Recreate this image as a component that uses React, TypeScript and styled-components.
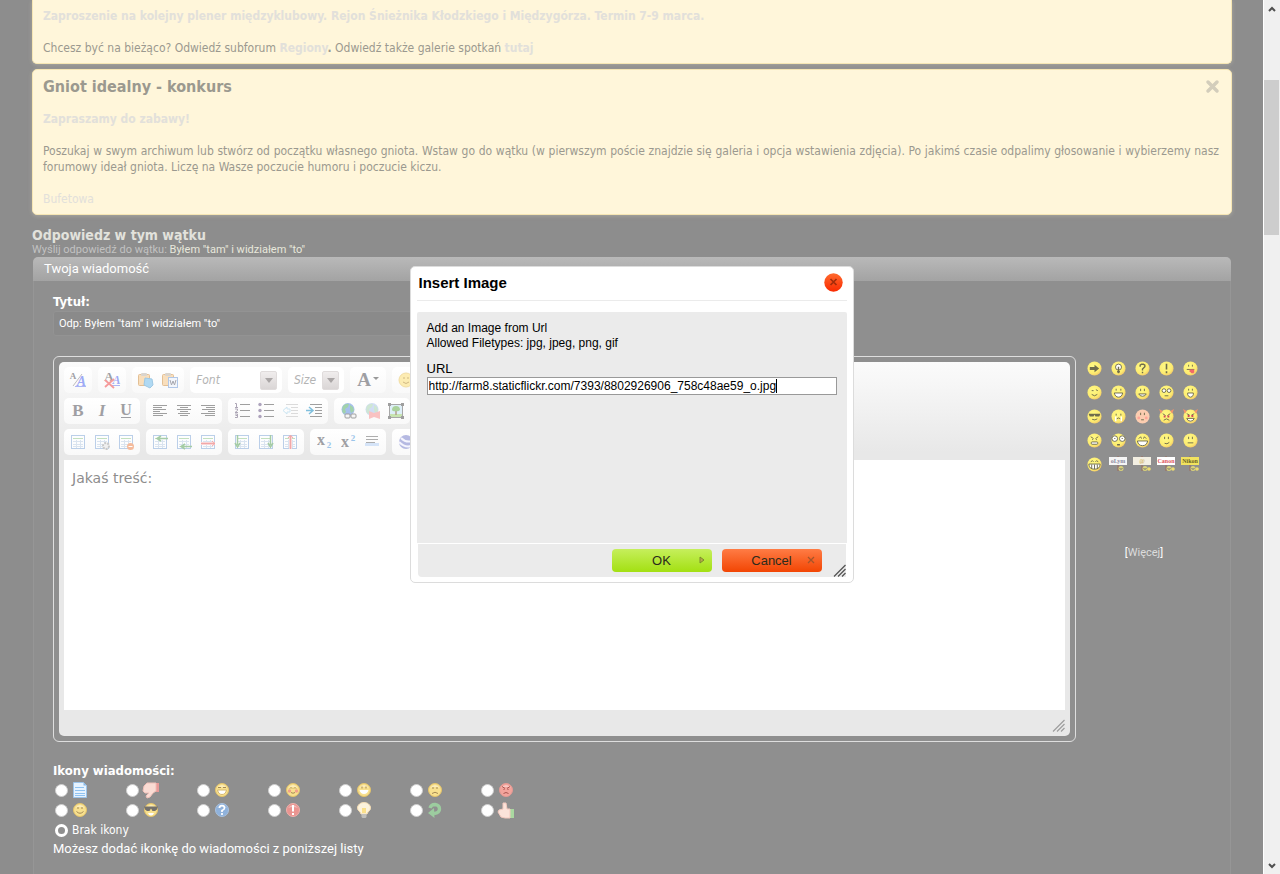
import React from "react";
import styled, { createGlobalStyle, css } from "styled-components";

const ui = `"DejaVu Sans Condensed", "DejaVu Sans", sans-serif`;
const narrow = `Roboto, "Open Sans", sans-serif`;
const arial = `"Liberation Sans", Arial, sans-serif`;

const GlobalStyle = createGlobalStyle`
  *, *::before, *::after { box-sizing: border-box; }
  body { margin: 0; background: #8d8d8d; font: 12px/16px ${ui}; color: #fff; }
  button, input, select, textarea { font: inherit; margin: 0; }
  svg { display: block; flex: none; overflow: visible; }
`;

/* ---------- page frame ---------- */

const Shell = styled.div`
  display: flex;
  height: 100vh;
  overflow: hidden;
`;

const Page = styled.main`
  flex: 1;
  min-width: 0;
  padding: 0 31px 0 32px;
  position: relative;
  display: flex;
  flex-direction: column;
`;

const Scrollbar = styled.aside`
  width: 17px;
  flex: none;
  background: #f0f0f0;
  border-left: 1px solid #fff;
  display: flex;
  flex-direction: column;
`;

const ScrollArrow = styled.button`
  border: 0;
  padding: 0;
  height: 17px;
  background: none;
  display: grid;
  place-items: center;
`;

const ScrollTrack = styled.div`
  flex: 1;
  padding: 63px 1px 0 0;
`;

const ScrollThumb = styled.div`
  height: 20%;
  background: #cdcdcd;
`;

/* ---------- notices ---------- */

const Notice = styled.section<{ $cut?: boolean }>`
  flex: none;
  color: #9b998f;
  background: #fff6da;
  border: 1px solid #f6e6b4;
  border-radius: 5px;
  padding: 6px 12px 7px 10px;
  box-shadow: 0 1px 4px rgba(255, 246, 218, 0.25);
  text-align: justify;
  ${(p) =>
    p.$cut &&
    css`
      border-top: 0;
      border-radius: 0 0 5px 5px;
      padding-top: 8px;
      margin-bottom: 5px;
    `}
`;

const NoticeHead = styled.header`
  display: flex;
  justify-content: space-between;
  align-items: flex-start;
  margin-bottom: 13px;
`;

const NoticeTitle = styled.h2`
  margin: 0;
  font-size: 16px;
  line-height: 22px;
`;

const Dismiss = styled.button`
  border: 0;
  padding: 0;
  background: none;
  width: 13px;
  height: 20px;
`;

const Para = styled.p`
  margin: 0 0 16px;
  &:last-child {
    margin-bottom: 0;
  }
`;

const PaleLink = styled.a<{ $bold?: boolean }>`
  color: #e2e0da;
  text-decoration: none;
  font-weight: ${(p) => (p.$bold ? 700 : 400)};
`;

/* ---------- reply form ---------- */

const ReplyTitle = styled.h1`
  margin: 12px 0 0;
  font-size: 14px;
  line-height: 16px;
  color: #e2e2dc;
`;

const ReplySub = styled.p`
  margin: 0;
  font: 11px/14px ${narrow};
  color: #c2c2c2;
  a {
    color: #e8e8dc;
    text-decoration: none;
  }
`;

const Block = styled.form`
  margin: 0 1px;
  flex: 1;
  display: flex;
  flex-direction: column;
`;

const BlockHead = styled.h3`
  margin: 0;
  flex: none;
  padding: 0 11px;
  font: 400 13px/24px ${narrow};
  border-radius: 5px 5px 0 0;
  background: linear-gradient(#b9b9b9, #a3a3a3);
`;

const BlockBody = styled.div`
  flex: 1;
  padding: 12px 24px 0 19px;
  background: #8f8f8f;
  border: solid #969696;
  border-width: 0 1px;
`;

const Label = styled.label`
  display: block;
  font-size: 13px;
  font-weight: 700;
  line-height: 18px;
`;

const TitleInput = styled.input`
  display: block;
  width: 100%;
  max-width: 480px;
  height: 25px;
  margin-bottom: 20px;
  padding: 0 5px;
  && {
    font: 11px/16px ${narrow};
  }
  color: #fff;
  background: #8a8a8a;
  border: 1px solid #939393;
  border-radius: 3px;
`;

const EditRow = styled.div`
  display: flex;
  gap: 6px;
  margin-bottom: 20px;
`;

const EditorFrame = styled.div`
  flex: 1;
  min-width: 0;
  padding: 5px;
  border: 1px solid #dedede;
  border-radius: 6px;
`;

const Editor = styled.div`
  padding: 5px 5px 0;
  border-radius: 5px;
  background: linear-gradient(#fbfbfb, #e8e8e8 90px);
`;

const Tools = styled.div`
  display: flex;
  flex-direction: column;
  gap: 5px;
  margin-bottom: 5px;
`;

const ToolRow = styled.div`
  display: flex;
  gap: 6px;
`;

const Group = styled.div`
  display: flex;
  align-items: center;
  height: 26px;
  padding: 0 2px;
  border-radius: 5px;
  background: linear-gradient(#fff, #f9f9f9);
`;

const ToolButton = styled.button<{ $wide?: boolean }>`
  width: ${(p) => (p.$wide ? 32 : 24)}px;
  height: 24px;
  padding: 0;
  border: 0;
  background: none;
  display: grid;
  place-items: center;
  svg {
    opacity: 0.85;
  }
`;

const Combo = styled.label<{ $w: number }>`
  display: flex;
  align-items: center;
  width: ${(p) => p.$w}px;
  height: 26px;
  padding: 0 5px 0 6px;
  border-radius: 5px;
  background: #fff;
  select {
    flex: 1;
    min-width: 0;
    appearance: none;
    border: 0;
    padding: 0;
    background: none;
    font: italic 12px/16px ${ui};
    color: #b4b4b4;
  }
`;

const ComboArrow = styled.span`
  display: grid;
  place-items: center;
  width: 17px;
  height: 19px;
  border-radius: 2px;
  border: 1px solid #e0dcdc;
  background: linear-gradient(#f0eded, #dad6d6);
`;

const TextArea = styled.textarea`
  display: block;
  width: 100%;
  height: 250px;
  padding: 9px 8px;
  border: 0;
  resize: none;
  outline: 0;
  && {
    font: 14px/18px "DejaVu Sans", sans-serif;
  }
  color: #8d8d8d;
  background: #fff;
`;

const EditorFoot = styled.div`
  display: flex;
  justify-content: flex-end;
  align-items: center;
  height: 26px;
  padding-top: 4px;
`;

const Smilies = styled.div`
  width: 124px;
  flex: none;
  display: flex;
  flex-direction: column;
`;

const SmileyGrid = styled.div`
  display: grid;
  grid-template-columns: repeat(5, 24px);
  grid-auto-rows: 24px;
  margin-bottom: 69px;
`;

const SmileyButton = styled.button`
  border: 0;
  padding: 0;
  background: none;
  display: grid;
  place-items: center;
`;

const More = styled.div`
  text-align: center;
  font-family: ${narrow};
  font-size: 11px;
  a {
    color: #dcdcdc;
    text-decoration: none;
  }
`;

const IconSet = styled.fieldset`
  border: 0;
  margin: 0;
  padding: 0;
  legend {
    padding: 0;
    font-size: 13px;
    font-weight: 700;
    line-height: 18px;
  }
`;

const IconGrid = styled.div`
  display: grid;
  grid-template-columns: repeat(7, 71px);
  grid-auto-rows: 20px;
`;

const Choice = styled.label`
  display: flex;
  align-items: center;
  gap: 4px;
  padding-left: 2px;
  line-height: 20px;
`;

const Radio = styled.input`
  appearance: none;
  width: 13px;
  height: 13px;
  border-radius: 50%;
  background: #fff;
  border: 1px solid #cfcfcf;
  &:checked {
    background: #8f8f8f;
    border: 3px solid #fff;
  }
`;

const Hint = styled.p`
  margin: 0;
  font: 13px/18px ${narrow};
`;

/* ---------- dialog ---------- */

const Overlay = styled.div`
  position: absolute;
  inset: 0;
  display: flex;
  justify-content: center;
  align-items: flex-start;
  padding-top: 266px;
`;

const Dialog = styled.div`
  width: 444px;
  max-width: 100%;
  padding: 0 6px 5px;
  color: #000;
  font: 12px/15px ${arial};
  background: #fff;
  border: 1px solid #dcdcdc;
  border-radius: 5px;
`;

const DialogHead = styled.header`
  display: flex;
  align-items: center;
  justify-content: space-between;
  height: 34px;
  padding: 0 4px 2px 2px;
  border-bottom: 1px solid #ebebeb;
  margin-bottom: 11px;
  h2 {
    margin: 0;
    font-size: 15px;
    line-height: 18px;
  }
  button {
    border: 0;
    padding: 0;
    background: none;
  }
`;

const DialogBody = styled.div`
  height: 231px;
  padding: 9px 10px;
  background: #ebebeb;
  border-radius: 2px 2px 0 0;
  p {
    margin: 0 0 10px;
  }
  label {
    display: block;
    font-size: 13px;
    line-height: 15px;
  }
`;

const UrlBox = styled.div`
  display: flex;
  align-items: center;
  height: 18px;
  margin-top: 1px;
  padding: 0 1px;
  background: #fff;
  border: 1px solid #999;
  input {
    field-sizing: content;
    border: 0;
    padding: 0;
    outline: 0;
    background: none;
    font: 12px/14px ${arial};
    color: #000;
    caret-color: transparent;
  }
`;

const Caret = styled.span`
  width: 1px;
  height: 14px;
  background: #000;
`;

const DialogFoot = styled.footer`
  display: flex;
  justify-content: flex-end;
  align-items: flex-start;
  gap: 10px;
  height: 33px;
  margin: 1px 1px 0;
  padding-top: 5px;
  background: #ebebeb;
  border-radius: 0 0 0 4px;
`;

const ActionButton = styled.button<{ $tone: "ok" | "cancel" }>`
  display: grid;
  grid-template-columns: 1fr auto 1fr;
  align-items: center;
  width: 100px;
  height: 23px;
  padding: 0 7px 1px;
  border: 0;
  border-radius: 4px;
  font-size: 13px;
  color: #2b2b1c;
  background: ${(p) =>
    p.$tone === "ok" ? "linear-gradient(#c6ef5c, #a3e012)" : "linear-gradient(#ff7c45, #f24503)"};
  span {
    grid-column: 2;
  }
  svg {
    justify-self: end;
  }
`;

const GripSlot = styled.div`
  align-self: flex-end;
  display: flex;
  justify-content: flex-end;
  width: 14px;
`;

/* ---------- drawings ---------- */

const Svg = ({ s = 16, children }: { s?: number; children: React.ReactNode }) => (
  <svg width={s} height={s} viewBox="0 0 16 16" fill="none" aria-hidden="true">
    {children}
  </svg>
);

const Glyph = styled.text`
  font-family: "Liberation Serif", serif;
  font-weight: 700;
  font-size: 17px;
  text-anchor: middle;
  fill: #8f8f94;
`;

const lines = (rows: [number, number][], color = "#8f8f8f") =>
  rows.map(([a, b], i) => <path key={i} d={`M${a} ${2.5 + i * 2}H${b}`} stroke={color} />);

const Table = () => (
  <>
    <rect x="1.5" y="1.5" width="13" height="13" fill="#fdfeff" stroke="#b0c8e6" />
    <path d="M3 4.5h10" stroke="#b9dcb5" />
    <path d="M3 7.5h10M3 10.5h10M3 12.5h10M6.5 6v8M10.5 6v8" stroke="#d5e0ee" />
  </>
);

const Globe = ({ pale }: { pale?: boolean }) => (
  <g opacity={pale ? 0.4 : 0.8}>
    <circle cx="8" cy="6.5" r="6.5" fill="#7fa4e6" />
    <path d="M3 3q3-3 6-2l-1 3-3 2 1 3-2 2Q1 8 3 3zM10 2l3 2 1 4-3 2-1-3z" fill="#77bf86" />
  </g>
);

const Clip = () => (
  <>
    <rect x="0.5" y="2.5" width="11" height="11" rx="1" fill="#f9dab2" stroke="#dfb684" />
    <rect x="3" y="1" width="6" height="3" rx="1" fill="#d5cfc6" />
  </>
);

const toolArt: Record<string, React.ReactNode> = {
  styles: (
    <>
      <Glyph x="3" y="7" style={{ fontSize: 9 }}>A</Glyph>
      <path d="M3 14L12 2" stroke="#b5b5b5" />
      <Glyph x="11.5" y="14" style={{ fill: "#8e9cf5", fontSize: 14, fontStyle: "italic" }}>A</Glyph>
      <path d="M5 14.5h11" stroke="#9fabf5" />
    </>
  ),
  unformat: (
    <>
      <Glyph x="5" y="9" style={{ fontSize: 13 }}>A</Glyph>
      <Glyph x="12.5" y="12" style={{ fill: "#8e9cf5", fontSize: 12, fontStyle: "italic" }}>A</Glyph>
      <path d="M8 13.5h8" stroke="#9fabf5" />
      <path d="M1 8l9 8M10 7L1 15" stroke="#f58b8b" strokeWidth="1.8" />
    </>
  ),
  paste: (
    <>
      <Clip />
      <path d="M7 6l7 1 1 6-3 3-6-3z" fill="#a3d4f2" stroke="#8fc0e0" />
    </>
  ),
  word: (
    <>
      <Clip />
      <rect x="6.5" y="5.5" width="9" height="10" fill="#f2f6fc" stroke="#a5bfe5" />
      <path d="M8 8l1.5 5L11 9l1.5 4L14 8" stroke="#9a9aa2" />
    </>
  ),
  bold: <Glyph x="8" y="13">B</Glyph>,
  italic: <Glyph x="8" y="13" style={{ fontStyle: "italic" }}>I</Glyph>,
  underline: (
    <>
      <Glyph x="8" y="12" style={{ fontSize: 16 }}>U</Glyph>
      <path d="M3 14.5h10" stroke="#8f8f94" />
    </>
  ),
  left: lines([[1, 15], [1, 10], [1, 14], [1, 8], [1, 15], [1, 11]]),
  center: lines([[1, 15], [4, 12], [1, 15], [4, 12], [2, 14], [4, 12]]),
  right: lines([[1, 15], [6, 15], [2, 15], [8, 15], [1, 15], [5, 15]]),
  ol: (
    <>
      <path d="M1 .5h1.5V4M1 4.5h3M1 6h2.5v1.5L1 9.5h3M1 11h2.5v3.5H1M1.5 12.5h2" stroke="#a098aa" />
      <path d="M6 1.5h10M6 7.5h10M6 13.5h10" stroke="#8f8f8f" />
    </>
  ),
  ul: (
    <>
      <circle cx="2" cy="1.5" r="1.7" fill="#a094b2" />
      <circle cx="2" cy="7.5" r="1.7" fill="#a094b2" />
      <circle cx="2" cy="13.5" r="1.7" fill="#a094b2" />
      <path d="M6 1.5h10M6 7.5h10M6 13.5h10" stroke="#8f8f8f" />
    </>
  ),
  outdent: (
    <>
      <path d="M4 1.5h12M9 4.5h7M9 7.5h7M9 10.5h7M4 13.5h12" stroke="#d6d6d6" />
      <path d="M5 4L1 7.5 5 11V9h3V6H5z" stroke="#c5e3f2" />
    </>
  ),
  indent: (
    <>
      <path d="M4 1.5h12M9 4.5h7M9 7.5h7M9 10.5h7M4 13.5h12" stroke="#8f8f8f" />
      <path d="M3 4l4 3.5L3 11M0 7.5h6" stroke="#6bb5d8" strokeWidth="1.5" />
    </>
  ),
  link: (
    <>
      <Globe />
      <rect x="5" y="11" width="5" height="4" rx="1" fill="#f4f4f4" stroke="#8f8f8f" />
      <rect x="11" y="11" width="5" height="4" rx="1" fill="#f4f4f4" stroke="#8f8f8f" />
    </>
  ),
  unlink: (
    <>
      <Globe pale />
      <path d="M5 8l5 2 6-2v8l-6-2-5 2z" fill="#f9b9b9" />
    </>
  ),
  image: (
    <>
      <rect x="1.5" y="1.5" width="13" height="13" fill="#d9edf8" stroke="#999" />
      <path d="M2 11h12v3H2z" fill="#bfe0a4" />
      <path d="M8 12V8" stroke="#a58f78" strokeWidth="1.5" />
      <path d="M4 7q0-4 4-4t4 4q-2 2-4 1-3 1-4-1z" fill="#9ccb8c" />
      <path d="M0 0h3v3H0zM13 0h3v3h-3zM0 13h3v3H0zM13 13h3v3h-3z" fill="#8f8f8f" />
    </>
  ),
  table: <Table />,
  tableProps: (
    <>
      <Table />
      <circle cx="12" cy="12" r="3" fill="#eee" stroke="#c0c0c0" strokeWidth="2" strokeDasharray="2 1" />
    </>
  ),
  tableDel: (
    <>
      <Table />
      <circle cx="12.5" cy="12.5" r="3.5" fill="#f3b08c" />
      <path d="M10.5 12.5h4" stroke="#fff" />
    </>
  ),
  rowBefore: (
    <>
      <Table />
      <path d="M16 4.5H6M9 2L5 4.5 9 7" stroke="#97c497" strokeWidth="1.5" />
    </>
  ),
  rowAfter: (
    <>
      <Table />
      <path d="M16 12.5H6M9 10l-4 2.5L9 15" stroke="#97c497" strokeWidth="1.5" />
    </>
  ),
  rowDel: (
    <>
      <Table />
      <path d="M1 8h14v3H1z" fill="#fbd0d0" />
      <path d="M1 9.5h14M12 7l3 2.5-3 2.5" stroke="#f09a9a" />
    </>
  ),
  colBefore: (
    <>
      <Table />
      <path d="M3.5 1v10M1 9l2.5 4L6 9" stroke="#97c497" strokeWidth="1.5" />
    </>
  ),
  colAfter: (
    <>
      <Table />
      <path d="M12.5 1v10M10 9l2.5 4L15 9" stroke="#97c497" strokeWidth="1.5" />
    </>
  ),
  colDel: (
    <>
      <Table />
      <path d="M7 2h3v13H7z" fill="#fbd0d0" />
      <path d="M8.5 15V2M6 4l2.5-3L11 4" stroke="#f09a9a" />
    </>
  ),
  sub: (
    <>
      <Glyph x="5" y="11" style={{ fontSize: 16 }}>x</Glyph>
      <Glyph x="13" y="14" style={{ fontSize: 9, fill: "#8cbce8" }}>2</Glyph>
    </>
  ),
  sup: (
    <>
      <Glyph x="5" y="13" style={{ fontSize: 16 }}>x</Glyph>
      <Glyph x="13" y="7" style={{ fontSize: 9, fill: "#8cbce8" }}>2</Glyph>
    </>
  ),
  hr: (
    <>
      <path d="M2 2.5h12M2 5.5h12M2 8.5h9" stroke="#a0a0a0" />
      <rect x="1" y="9" width="14" height="3" fill="#cfe0f8" />
    </>
  ),
  ball: (
    <>
      <circle cx="8" cy="8" r="7" fill="#a9aede" />
      <path d="M3 4q5 5 11 3M1 8q6 6 12 4" stroke="#f4f4ff" strokeWidth="2" />
    </>
  ),
  smile: (
    <>
      <circle cx="8" cy="8" r="7" fill="#fdeaa6" stroke="#f0d894" />
      <path d="M5 10q3 3 6 0M6 5v2M10 5v2" stroke="#c9ad70" />
    </>
  ),
};

const Triangle = ({ color = "#aaa6a6" }: { color?: string }) => (
  <svg width="8" height="5" viewBox="0 0 8 5" aria-hidden="true">
    <path d="M0 0h8L4 5z" fill={color} />
  </svg>
);

const ink = "#6f6c4c";

const faceArt: Record<string, React.ReactNode> = {
  arrow: <path d="M3 6.5h5V4l5 4-5 4V9.5H3z" fill={ink} />,
  idea: (
    <>
      <circle cx="8" cy="6.5" r="3.2" fill="#fff" stroke={ink} />
      <path d="M8 6v7M6.5 11.5h3" stroke={ink} strokeWidth="1.5" />
    </>
  ),
  question: <path d="M5.5 6V4.5L7 3.5h2l1.500 1V6L8 8.500V10M8 11.500v1.500" stroke={ink} strokeWidth="1.5" />,
  exclaim: <path d="M8 3v6M8 11v2" stroke={ink} strokeWidth="1.7" />,
  razz: (
    <>
      <path d="M6 4v2M10 4v2M4 9h8" stroke={ink} />
      <path d="M7 9h5v3l-1 1H9l-2-2z" fill="#f26a6a" />
    </>
  ),
  wink: <path d="M5 6h2M9.5 5l2 1M5 10q3 3 6 0" stroke={ink} />,
  grin: (
    <>
      <path d="M5.5 4v2M10.5 4v2" stroke={ink} />
      <path d="M3.5 8.5h9q-1 4.500-4.500 4.500T3.500 8.500z" fill="#fff" stroke={ink} />
    </>
  ),
  happy: (
    <>
      <path d="M6 4v2.5M10 4v2.5" stroke={ink} />
      <path d="M4 9.5h8q-1 2.500-4 2.500T4 9.500z" fill="#fff" stroke={ink} />
    </>
  ),
  roll: (
    <>
      <circle cx="5.3" cy="6" r="2" fill="#fff" stroke={ink} />
      <circle cx="10.7" cy="6" r="2" fill="#fff" stroke={ink} />
      <path d="M6 11.5h4" stroke={ink} />
    </>
  ),
  shout: (
    <>
      <path d="M6 4v2M10 4v2" stroke={ink} />
      <path d="M5 8.5h6v2q-1 2.500-3 2.500t-3-2.500z" fill="#fff" stroke={ink} />
    </>
  ),
  cool: (
    <>
      <path d="M2 5h12v1l-1 2h-4l-1-2-1 2H3L2 6z" fill={ink} />
      <path d="M5.5 11q3 1.500 5.500-.5" stroke={ink} />
    </>
  ),
  cry: (
    <>
      <path d="M5.5 5v2M10.5 5v2M6 10.5q2-2 4 0" stroke={ink} />
      <path d="M5 8v5M11 8v5" stroke="#fff" strokeWidth="1.5" />
    </>
  ),
  blush: (
    <>
      <path d="M6 4v2.5M10 4v2.5M6.5 11.5h3" stroke={ink} />
      <circle cx="4" cy="9.5" r="1.5" fill="#ffa598" />
      <circle cx="12" cy="9.5" r="1.5" fill="#ffa598" />
    </>
  ),
  evil: (
    <>
      <path d="M0 0l4 2-2 3zM16 0l-4 2 2 3z" fill="#f0936c" />
      <path d="M4 5l3 2M12 5L9 7M5 12l3-1.5 3 1.5" stroke={ink} />
      <path d="M5 8h2M9 8h2" stroke="#d4455a" strokeWidth="2" />
    </>
  ),
  twisted: (
    <>
      <path d="M0 0l4 2-2 3zM16 0l-4 2 2 3z" fill="#f0936c" />
      <path d="M4 5l3 1.5M12 5L9 6.5" stroke={ink} />
      <path d="M5 7.5h2M9 7.5h2" stroke="#d4455a" strokeWidth="2" />
      <path d="M4 10h8q-1 3-4 3t-4-3z" fill="#fff" stroke={ink} />
    </>
  ),
  mad: (
    <>
      <path d="M4 4l3 2M12 4L9 6M5.5 7h1M9.5 7h1" stroke={ink} />
      <rect x="4.5" y="9.5" width="7" height="2.5" rx="1" fill="#fff" stroke={ink} />
    </>
  ),
  shock: (
    <>
      <circle cx="4" cy="6" r="3" fill="#fff" stroke={ink} />
      <circle cx="12" cy="6" r="3" fill="#fff" stroke={ink} />
      <path d="M4 5.5v1M12 5.5v1M6.5 12.5h3" stroke={ink} strokeWidth="1.5" />
    </>
  ),
  lol: (
    <>
      <path d="M4 6l2-2 1 2M9 6l1-2 2 2" stroke={ink} />
      <path d="M2.5 8.5h11q-1 5-5.500 5t-5.500-5z" fill="#fff" stroke={ink} />
    </>
  ),
  smile: <path d="M6 4v2.5M10 4v2.5M6 11q2.500 1.500 5-1" stroke={ink} />,
  neutral: <path d="M6 4v2.5M10 4v2.5M5 10.5h6" stroke={ink} />,
  teeth: (
    <>
      <path d="M4 5l2-1 1 1M9 5l1-1 2 1" stroke={ink} />
      <path d="M2 7.5h12q0 5.500-6 5.500T2 7.500zM5 8v4.500M8 8v5M11 8v4.500" fill="#fff" stroke={ink} />
    </>
  ),
};

const Face = ({ kind }: { kind: string }) => (
  <Svg s={15}>
    <circle cx="8" cy="8" r="7.5" fill={kind === "blush" ? "#fccdb0" : "url(#faceFill)"} />
    {faceArt[kind]}
  </Svg>
);

const Sign = ({ bg, fg, text }: { bg: string; fg: string; text: string }) => (
  <svg width="18" height="16" viewBox="0 0 18 16" aria-hidden="true">
    <path d="M9 0v15" stroke="#9c6a5a" />
    <rect y="1" width="18" height="8" fill={bg} />
    <text x="9" y="7" textAnchor="middle" fontSize="6" fontWeight="700" fontFamily="Liberation Serif" fill={fg}>
      {text}
    </text>
    <circle cx="12" cy="12.5" r="2.5" fill="#d9d27a" />
    <path d="M10.5 12.5q1.500 1.500 3 0" stroke="#777" fill="none" />
    {bg !== "#f5f5f5" && <circle cx="16" cy="13" r="1.8" fill="#eedc70" />}
  </svg>
);

const faces = [
  "arrow", "idea", "question", "exclaim", "razz",
  "wink", "grin", "happy", "roll", "shout",
  "cool", "cry", "blush", "evil", "twisted",
  "mad", "shock", "lol", "smile", "neutral", "teeth",
];

const signs = [
  { name: "Olympus", bg: "#f5f5f5", fg: "#8a8aa0", text: "oLym" },
  { name: "Pentax", bg: "#f3efe2", fg: "#d8bd78", text: "@" },
  { name: "Canon", bg: "#ffffff", fg: "#e0545c", text: "Canon" },
  { name: "Nikon", bg: "#f2e35f", fg: "#6a6426", text: "Nikon" },
];

const Ball = ({ fill = "#f8e08e", edge = "#e5c46a" }: { fill?: string; edge?: string }) => (
  <>
    <circle cx="8" cy="8" r="6.5" fill={fill} stroke={edge} />
    <path d="M3 6q5-6 10 0-5-2-10 0z" fill="#fff" opacity="0.4" />
  </>
);

const mark = "#a58a55";

const postIcons: { name: string; art: React.ReactNode }[] = [
  {
    name: "Post",
    art: (
      <>
        <path d="M1.5 .5h10l3 3v12h-13z" fill="#e6f3ff" stroke="#9cc4ea" />
        <path d="M3 5.5h9M3 8.5h10M3 11.5h10M3 13.5h10" stroke="#8fc3f2" />
        <path d="M11.5 .5v3h3z" fill="#8ab8e4" />
      </>
    ),
  },
  {
    name: "Thumbs down",
    art: (
      <>
        <path d="M13 1h3v9h-3z" fill="#e89a98" />
        <path d="M13 1H4L1 4 0 9l2 2h4l-3 3 1 2 3-1 3-4 3-2z" fill="#fadcd4" stroke="#f0c0b8" />
      </>
    ),
  },
  {
    name: "Mr. Green",
    art: (
      <>
        <Ball />
        <path d="M4 5.5h3M9 5.5h3" stroke={mark} />
        <path d="M3.5 8h9q-1 4.500-4.500 4.500T3.500 8z" fill="#fff" stroke="#d5b870" />
      </>
    ),
  },
  {
    name: "Red face",
    art: (
      <>
        <Ball />
        <circle cx="4.5" cy="9" r="1.7" fill="#f2a08a" />
        <circle cx="11.5" cy="9" r="1.7" fill="#f2a08a" />
        <path d="M5 6.5l1-1 1 1M9 6.5l1-1 1 1M6 10.5q2 1.500 4 0" stroke={mark} />
      </>
    ),
  },
  {
    name: "Big grin",
    art: (
      <>
        <Ball />
        <path d="M6 4.5v2M10 4.5v2" stroke={mark} />
        <path d="M3.5 8h9q-1 4-4.500 4T3.500 8z" fill="#fff" />
      </>
    ),
  },
  {
    name: "Frown",
    art: (
      <>
        <Ball />
        <path d="M6 5v2M10 5v2M5 11.5q3-2.500 6 0" stroke={mark} />
      </>
    ),
  },
  {
    name: "Mad",
    art: (
      <>
        <Ball fill="#f3a49c" edge="#e49a94" />
        <path d="M4 4.5l3 2M12 4.5l-3 2M5.5 7.5h1M9.5 7.5h1M5.5 11.5q2.500-2 5 0" stroke="#a85550" />
      </>
    ),
  },
  {
    name: "Smile",
    art: (
      <>
        <Ball />
        <path d="M6 5v2M10 5v2M4.5 9.5q3.500 3.500 7 0" stroke={mark} />
      </>
    ),
  },
  {
    name: "Cool",
    art: (
      <>
        <Ball />
        <path d="M1 4.5h14l-1 3-2 1.500H9.500L8 6.500 6.500 9H4L2 7.500z" fill="#74716c" />
        <path d="M5 11h6q-1 2.500-3 2.500T5 11z" fill="#fff" />
      </>
    ),
  },
  {
    name: "Question",
    art: (
      <>
        <Ball fill="#8fb2dc" edge="#a9c2e0" />
        <path d="M5.5 6q0-2.500 2.500-2.500T10.500 6Q10.500 7.500 8 8.500V10M8 11v2" stroke="#fff" strokeWidth="1.7" />
      </>
    ),
  },
  {
    name: "Exclamation",
    art: (
      <>
        <Ball fill="#ea9490" edge="#f0b0ac" />
        <path d="M8 3v6.5M8 11v2" stroke="#fff" strokeWidth="2" />
      </>
    ),
  },
  {
    name: "Lightbulb",
    art: (
      <>
        <path d="M4 10Q1 8 1.500 5 3 .5 8 .5T14.500 5Q15 8 12 10l-1 2H5z" fill="#fdf3dc" stroke="#f3dcb4" />
        <path d="M6 6h4v5H6z" fill="#fbe08a" />
        <path d="M5.5 12h5v3l-1 1h-3l-1-1z" fill="#c0bfbb" />
      </>
    ),
  },
  {
    name: "Arrow",
    art: (
      <>
        <path d="M3 6q1-3.500 5-3.500 4.500 .5 4.500 4.500T7 11.500" stroke="#9ccc9f" strokeWidth="3.4" />
        <path d="M1 11l6-5 .5 10z" fill="#9ccc9f" />
      </>
    ),
  },
  {
    name: "Thumbs up",
    art: (
      <>
        <path d="M12 7h4v9h-4z" fill="#a9d8a0" />
        <path d="M12 7H9l-1-6-3 0 0 6-4 1-1 2 3 5 4 1h5z" fill="#fbe3da" stroke="#f3c9be" />
      </>
    ),
  },
];

/* ---------- assembly ---------- */

const toolRows: string[][][] = [
  [["bold", "italic", "underline"], ["left", "center", "right"], ["ol", "ul", "outdent", "indent"], ["link", "unlink", "image"]],
  [
    ["table", "tableProps", "tableDel"],
    ["rowBefore", "rowAfter", "rowDel"],
    ["colBefore", "colAfter", "colDel"],
    ["sub", "sup", "hr"],
    ["ball"],
  ],
];

const ToolGroup = ({ names }: { names: string[] }) => (
  <Group>
    {names.map((n) => (
      <ToolButton key={n} type="button" aria-label={n}>
        <Svg>{toolArt[n]}</Svg>
      </ToolButton>
    ))}
  </Group>
);

const ComboBox = ({ label, width }: { label: string; width: number }) => (
  <Combo $w={width}>
    <select aria-label={label}>
      <option>{label}</option>
    </select>
    <ComboArrow>
      <Triangle />
    </ComboArrow>
  </Combo>
);

const Grip = ({ color }: { color: string }) => (
  <svg width="13" height="13" viewBox="0 0 13 13" aria-hidden="true">
    <path d="M1 12.5L12.5 1M5 12.5l7.500-7.500M9 12.5l3.500-3.500" stroke={color} strokeWidth="1.3" />
  </svg>
);

const Chevron = ({ down }: { down?: boolean }) => (
  <svg width="8" height="6" viewBox="0 0 8 6" fill="none" aria-hidden="true">
    <path d={down ? "M1 1l3 3 3-3" : "M1 5l3-3 3 3"} stroke="#505050" strokeWidth="2" />
  </svg>
);

export default function App() {
  return (
    <>
      <GlobalStyle />
      <Shell>
        <Page>
          <Notice $cut>
            <Para>
              <PaleLink $bold href="#plener">
                Zaproszenie na kolejny plener międzyklubowy. Rejon Śnieżnika Kłodzkiego i Międzygórza. Termin 7-9 marca.
              </PaleLink>
            </Para>
            <Para>
              Chcesz być na bieżąco? Odwiedź subforum{" "}
              <PaleLink $bold href="#regiony">Regiony</PaleLink>
              <b>.</b> Odwiedź także galerie spotkań{" "}
              <PaleLink $bold href="#tutaj">tutaj</PaleLink>
            </Para>
          </Notice>

          <Notice>
            <NoticeHead>
              <NoticeTitle>Gniot idealny - konkurs</NoticeTitle>
              <Dismiss type="button" aria-label="Zamknij">
                <svg width="13" height="13" viewBox="0 0 13 13" aria-hidden="true">
                  <path d="M2 2l9 9M11 2l-9 9" stroke="#d3cdbb" strokeWidth="3.5" strokeLinecap="round" />
                </svg>
              </Dismiss>
            </NoticeHead>
            <Para>
              <PaleLink $bold href="#zabawa">Zapraszamy do zabawy!</PaleLink>
            </Para>
            <Para>
              Poszukaj w swym archiwum lub stwórz od początku własnego gniota. Wstaw go do wątku (w pierwszym poście
              znajdzie się galeria i opcja wstawienia zdjęcia). Po jakimś czasie odpalimy głosowanie i wybierzemy nasz
              forumowy ideał gniota. Liczę na Wasze poczucie humoru i poczucie kiczu.
            </Para>
            <Para>
              <PaleLink href="#bufetowa">Bufetowa</PaleLink>
            </Para>
          </Notice>

          <ReplyTitle>Odpowiedz w tym wątku</ReplyTitle>
          <ReplySub>
            Wyślij odpowiedź do wątku: <a href="#watek">Byłem "tam" i widziałem "to"</a>
          </ReplySub>

          <Block>
            <BlockHead>Twoja wiadomość</BlockHead>
            <BlockBody>
              <Label htmlFor="title">Tytuł:</Label>
              <TitleInput id="title" defaultValue={'Odp: Byłem "tam" i widziałem "to"'} />

              <EditRow>
                <EditorFrame>
                  <Editor>
                    <Tools>
                      <ToolRow>
                        <ToolGroup names={["styles"]} />
                        <ToolGroup names={["unformat"]} />
                        <ToolGroup names={["paste", "word"]} />
                        <ComboBox label="Font" width={92} />
                        <ComboBox label="Size" width={56} />
                        <Group>
                          <ToolButton type="button" $wide aria-label="Text colour">
                            <svg width="24" height="16" viewBox="0 0 24 16" aria-hidden="true">
                              <Glyph x="8" y="14" style={{ fontSize: 19 }}>A</Glyph>
                              <path d="M17 5h6l-3 3z" fill="#888" />
                            </svg>
                          </ToolButton>
                        </Group>
                        <ToolGroup names={["smile"]} />
                      </ToolRow>
                      {toolRows.map((row, i) => (
                        <ToolRow key={i}>
                          {row.map((g) => (
                            <ToolGroup key={g[0]} names={g} />
                          ))}
                        </ToolRow>
                      ))}
                    </Tools>
                    <TextArea aria-label="Wiadomość" defaultValue="Jakaś treść:" />
                    <EditorFoot>
                      <Grip color="#a0a0a0" />
                    </EditorFoot>
                  </Editor>
                </EditorFrame>

                <Smilies>
                  <svg width="0" height="0" aria-hidden="true">
                    <radialGradient id="faceFill" cx="0.4" cy="0.35" r="0.7">
                      <stop offset="0" stopColor="#fffa86" />
                      <stop offset="0.7" stopColor="#fdec70" />
                      <stop offset="1" stopColor="#f2c566" />
                    </radialGradient>
                  </svg>
                  <SmileyGrid>
                    {faces.map((f) => (
                      <SmileyButton key={f} type="button" aria-label={f}>
                        <Face kind={f} />
                      </SmileyButton>
                    ))}
                    {signs.map((s) => (
                      <SmileyButton key={s.name} type="button" aria-label={s.name}>
                        <Sign bg={s.bg} fg={s.fg} text={s.text} />
                      </SmileyButton>
                    ))}
                  </SmileyGrid>
                  <More>
                    [<a href="#wiecej">Więcej</a>]
                  </More>
                </Smilies>
              </EditRow>

              <IconSet>
                <legend>Ikony wiadomości:</legend>
                <IconGrid>
                  {postIcons.map((p) => (
                    <Choice key={p.name}>
                      <Radio type="radio" name="icon" aria-label={p.name} />
                      <Svg>{p.art}</Svg>
                    </Choice>
                  ))}
                </IconGrid>
                <Choice>
                  <Radio type="radio" name="icon" defaultChecked />
                  Brak ikony
                </Choice>
                <Hint>Możesz dodać ikonkę do wiadomości z poniższej listy</Hint>
              </IconSet>
            </BlockBody>
          </Block>

          <Overlay>
            <Dialog role="dialog" aria-labelledby="dlg-title">
              <DialogHead>
                <h2 id="dlg-title">Insert Image</h2>
                <button type="button" aria-label="Close">
                  <svg width="19" height="19" viewBox="0 0 19 19" aria-hidden="true">
                    <defs>
                      <linearGradient id="closeFill" x1="0" y1="0" x2="0" y2="1">
                        <stop offset="0" stopColor="#ff6a2e" />
                        <stop offset="1" stopColor="#f92a00" />
                      </linearGradient>
                    </defs>
                    <circle cx="9.5" cy="9.5" r="9.2" fill="url(#closeFill)" />
                    <path d="M6.5 6l6 6M12.5 6l-6 6" stroke="#a32c0a" strokeWidth="1.7" />
                  </svg>
                </button>
              </DialogHead>
              <DialogBody>
                <p>
                  Add an Image from Url
                  <br />
                  Allowed Filetypes: jpg, jpeg, png, gif
                </p>
                <label htmlFor="url">URL</label>
                <UrlBox>
                  <input id="url" defaultValue="http://farm8.staticflickr.com/7393/8802926906_758c48ae59_o.jpg" />
                  <Caret />
                </UrlBox>
              </DialogBody>
              <DialogFoot>
                <ActionButton type="button" $tone="ok">
                  <span>OK</span>
                  <svg width="6" height="8" viewBox="0 0 6 8" aria-hidden="true">
                    <path d="M1 1l4 3-4 3z" fill="#b8a84c" stroke="#7a8a2a" />
                  </svg>
                </ActionButton>
                <ActionButton type="button" $tone="cancel">
                  <span>Cancel</span>
                  <svg width="8" height="8" viewBox="0 0 8 8" aria-hidden="true">
                    <path d="M1 1l6 6M7 1L1 7" stroke="#a5552a" strokeWidth="1.3" />
                  </svg>
                </ActionButton>
                <GripSlot>
                  <Grip color="#555" />
                </GripSlot>
              </DialogFoot>
            </Dialog>
          </Overlay>
        </Page>

        <Scrollbar>
          <ScrollArrow type="button" aria-label="Scroll up">
            <Chevron />
          </ScrollArrow>
          <ScrollTrack>
            <ScrollThumb />
          </ScrollTrack>
          <ScrollArrow type="button" aria-label="Scroll down">
            <Chevron down />
          </ScrollArrow>
        </Scrollbar>
      </Shell>
    </>
  );
}
